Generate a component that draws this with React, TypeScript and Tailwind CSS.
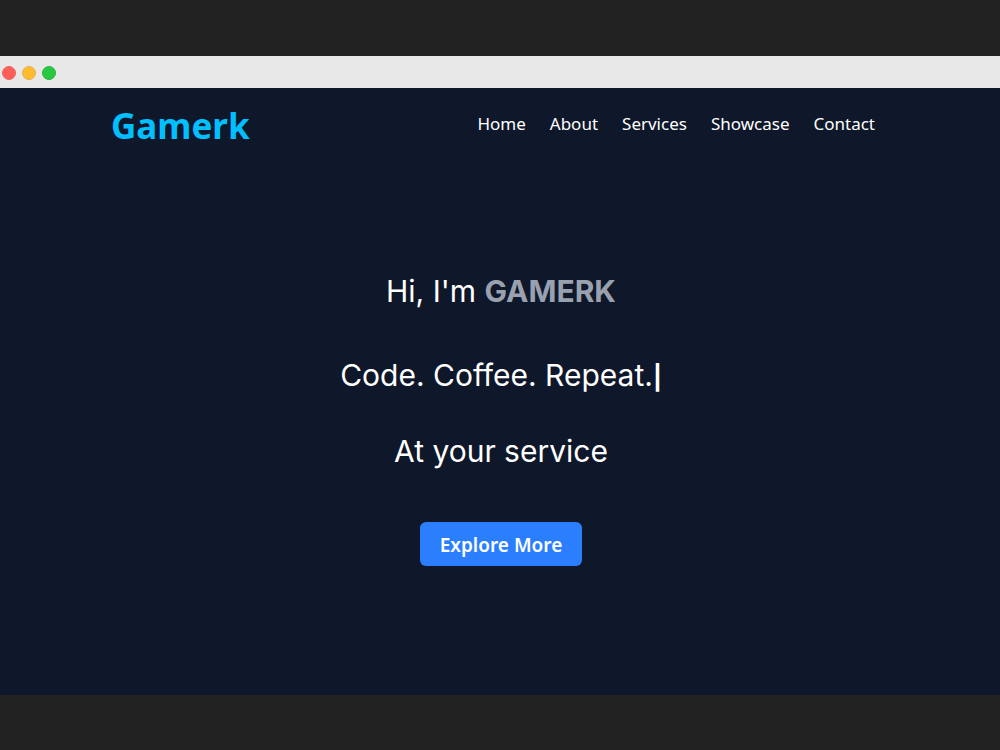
const navLinks = [
  { label: "Home", href: "#home" },
  { label: "About", href: "#about" },
  { label: "Services", href: "#services" },
  { label: "Showcase", href: "#showcase" },
  { label: "Contact", href: "#contact" },
];

function WindowBar() {
  return (
    <div className="flex h-8 items-center gap-1.5 bg-[#e8e8e8] px-0.5 pt-0.5">
      <span className="size-3.5 rounded-full border border-[#e9695f] bg-[#ff5f57]" />
      <span className="size-3.5 rounded-full border border-[#e6b04c] bg-[#febc2e]" />
      <span className="size-3.5 rounded-full border border-[#2fb344] bg-[#28c840]" />
    </div>
  );
}

function Navbar() {
  return (
    <header className="flex items-start justify-between pt-4 pr-[125px] pl-[111px] font-['Noto_Sans',sans-serif]">
      <a
        href="#home"
        className="text-[35px] leading-11 font-bold text-[#00bfff]"
      >
        Gamerk
      </a>
      <nav>
        <ul className="flex gap-6 text-[17px] leading-10 text-white">
          {navLinks.map((link) => (
            <li key={link.href}>
              <a href={link.href} className="hover:text-[#00bfff]">
                {link.label}
              </a>
            </li>
          ))}
        </ul>
      </nav>
    </header>
  );
}

function Hero() {
  return (
    <section
      id="home"
      className="flex grow flex-col items-center pt-[125px] pl-0.5 text-center text-3xl text-white"
    >
      <h1>
        Hi, I'm <span className="font-bold text-[#99a1af]">GAMERK</span>
      </h1>
      <p className="mt-12">
        Code. Coffee. Repeat.
        <span className="text-2xl leading-none font-bold">|</span>
      </p>
      <p className="mt-10">At your service</p>
      <button
        type="button"
        className="mt-[53px] h-11 rounded-md bg-[#2b7fff] px-5 pt-0.5 font-['Noto_Sans',sans-serif] text-[19px] font-semibold"
      >
        Explore More
      </button>
    </section>
  );
}

function App() {
  return (
    <main className="flex min-h-screen flex-col bg-[#222222] pt-14 pb-[55px] font-['Inter',sans-serif]">
      <WindowBar />
      <div className="flex grow flex-col bg-[#0f172a]">
        <Navbar />
        <Hero />
      </div>
    </main>
  );
}

export default App;
